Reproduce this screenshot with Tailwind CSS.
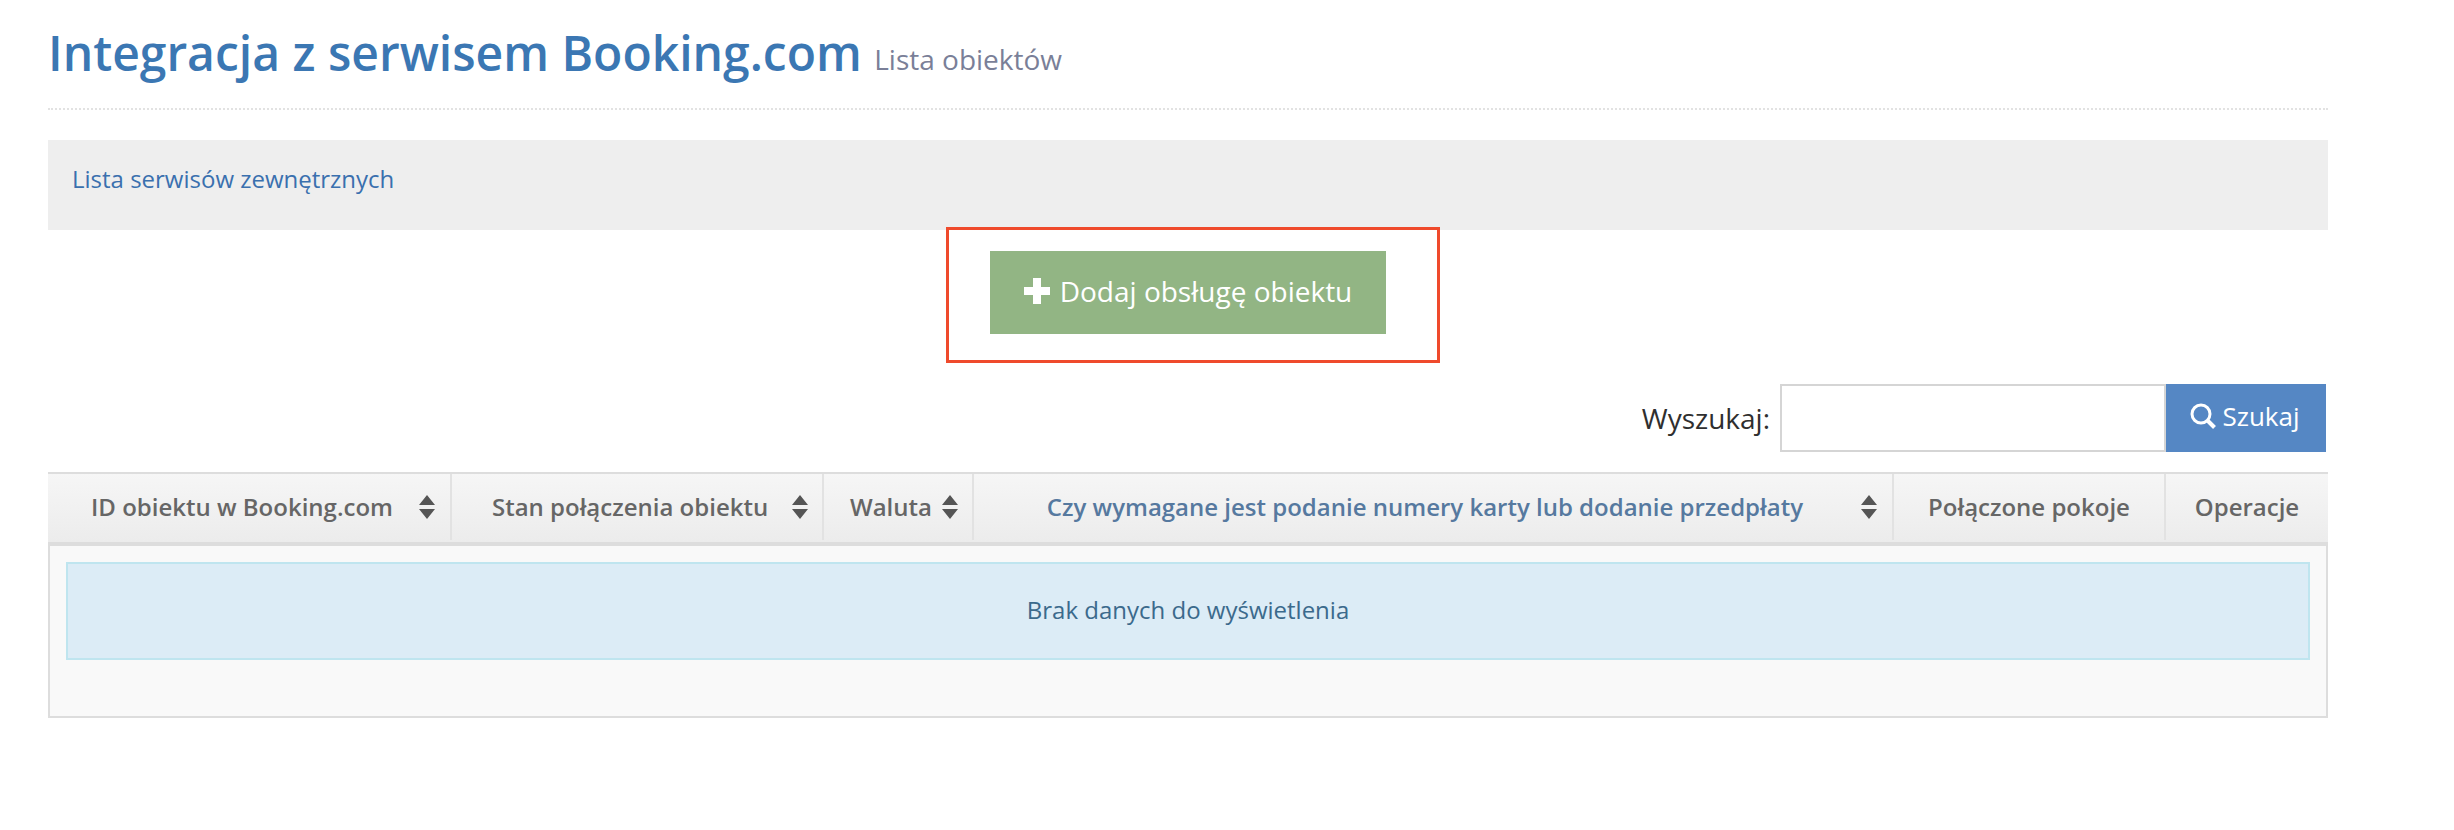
<!DOCTYPE html>
<html lang="pl">
<head>
  <meta charset="UTF-8">
  <title>Integracja z serwisem Booking.com</title>
  <script src="https://cdn.jsdelivr.net/npm/@tailwindcss/browser@4"></script>
</head>
<body class="bg-white font-['Open_Sans',sans-serif] overflow-hidden">
  <div class="w-[2280px] ml-[48px] relative">
    <!-- Header -->
    <div class="h-[110px] border-b-2 border-dotted border-[#e2e2e2] pt-[22px]">
      <h1 class="text-[48px] leading-[62px] font-semibold text-[#3b77b3] whitespace-nowrap">Integracja z serwisem Booking.com <small class="text-[28px] font-normal text-[#7a7f98] align-[1px]">Lista obiektów</small></h1>
    </div>

    <!-- Breadcrumb -->
    <div class="mt-[30px] h-[90px] bg-[#eeeeee] pl-[24px] pb-[12px] flex items-center">
      <a href="#" class="text-[24px] text-[#3a70ae]">Lista serwisów zewnętrznych</a>
    </div>

    <!-- Add button, highlighted -->
    <div class="flex justify-center ml-[10px]">
      <div class="-mt-[3px] w-[494px] h-[136px] border-[3px] border-[#ef4a2c] flex items-center justify-center">
        <button class="w-[396px] h-[83px] mr-[10px] mb-[6px] pb-[2px] bg-[#92b584] text-white text-[28px] flex items-center justify-center gap-[10px]">
          <svg width="26" height="26" viewBox="0 0 26 26" fill="#ffffff"><path d="M9 0h8v9h9v8h-9v9H9v-9H0V9h9z"/></svg>
          Dodaj obsługę obiektu
        </button>
      </div>
    </div>

    <!-- Search -->
    <div class="flex justify-end items-center mt-[21px] pr-[2px]">
      <label class="text-[28px] text-[#2f2f2f] mr-[10px]">Wyszukaj:</label>
      <input type="text" class="w-[386px] h-[68px] border-2 border-[#d5d5d5] bg-white">
      <button class="w-[160px] h-[68px] bg-[#5587c4] text-white text-[26px] flex items-center justify-center gap-[6px] pr-[2px] pb-[4px]">
        <svg width="26" height="26" viewBox="0 0 26 26" fill="none" stroke="#ffffff" stroke-width="3"><circle cx="11" cy="11" r="9"/><path d="M17.5 17.5L24.5 24.5" stroke-width="4"/></svg>
        Szukaj
      </button>
    </div>

    <!-- Table -->
    <div class="mt-[20px] border-x-2 border-b-2 border-[#dddddd] bg-[#f9f9f9] h-[246px]">
      <div class="flex h-[74px] border-t-2 border-b-4 border-[#dddddd] bg-linear-to-b from-[#f6f6f6] to-[#ececec] text-[24px] font-semibold text-[#666666] -mx-[2px] pb-[2px]">
        <div class="w-[404px] flex items-center pl-[43px] border-r-2 border-[#e2e2e2] whitespace-nowrap">
          ID obiektu w Booking.com
          <svg class="ml-[26px]" width="16" height="24" viewBox="0 0 16 24" fill="#555555"><path d="M8 0l8 10H0zM8 24L0 14h16z"/></svg>
        </div>
        <div class="w-[372px] flex items-center pl-[40px] border-r-2 border-[#e2e2e2] whitespace-nowrap">
          Stan połączenia obiektu
          <svg class="ml-[24px]" width="16" height="24" viewBox="0 0 16 24" fill="#555555"><path d="M8 0l8 10H0zM8 24L0 14h16z"/></svg>
        </div>
        <div class="w-[150px] flex items-center pl-[26px] border-r-2 border-[#e2e2e2] whitespace-nowrap">
          Waluta
          <svg class="ml-[10px]" width="16" height="24" viewBox="0 0 16 24" fill="#555555"><path d="M8 0l8 10H0zM8 24L0 14h16z"/></svg>
        </div>
        <div class="w-[920px] flex items-center justify-end pr-[15px] border-r-2 border-[#e2e2e2] whitespace-nowrap text-[#56799f]">
          Czy wymagane jest podanie numery karty lub dodanie przedpłaty
          <svg class="ml-[58px]" width="16" height="24" viewBox="0 0 16 24" fill="#555555"><path d="M8 0l8 10H0zM8 24L0 14h16z"/></svg>
        </div>
        <div class="w-[272px] flex items-center justify-center border-r-2 border-[#e2e2e2] whitespace-nowrap">Połączone pokoje</div>
        <div class="flex-1 flex items-center justify-center whitespace-nowrap">Operacje</div>
      </div>
      <div class="mt-[16px] mx-[16px] h-[98px] border-2 border-[#bfe5ef] bg-[#dcecf6] text-[24px] text-[#3b6a8c] flex items-center justify-center pb-[2px]">Brak danych do wyświetlenia</div>
    </div>
  </div>
</body>
</html>
